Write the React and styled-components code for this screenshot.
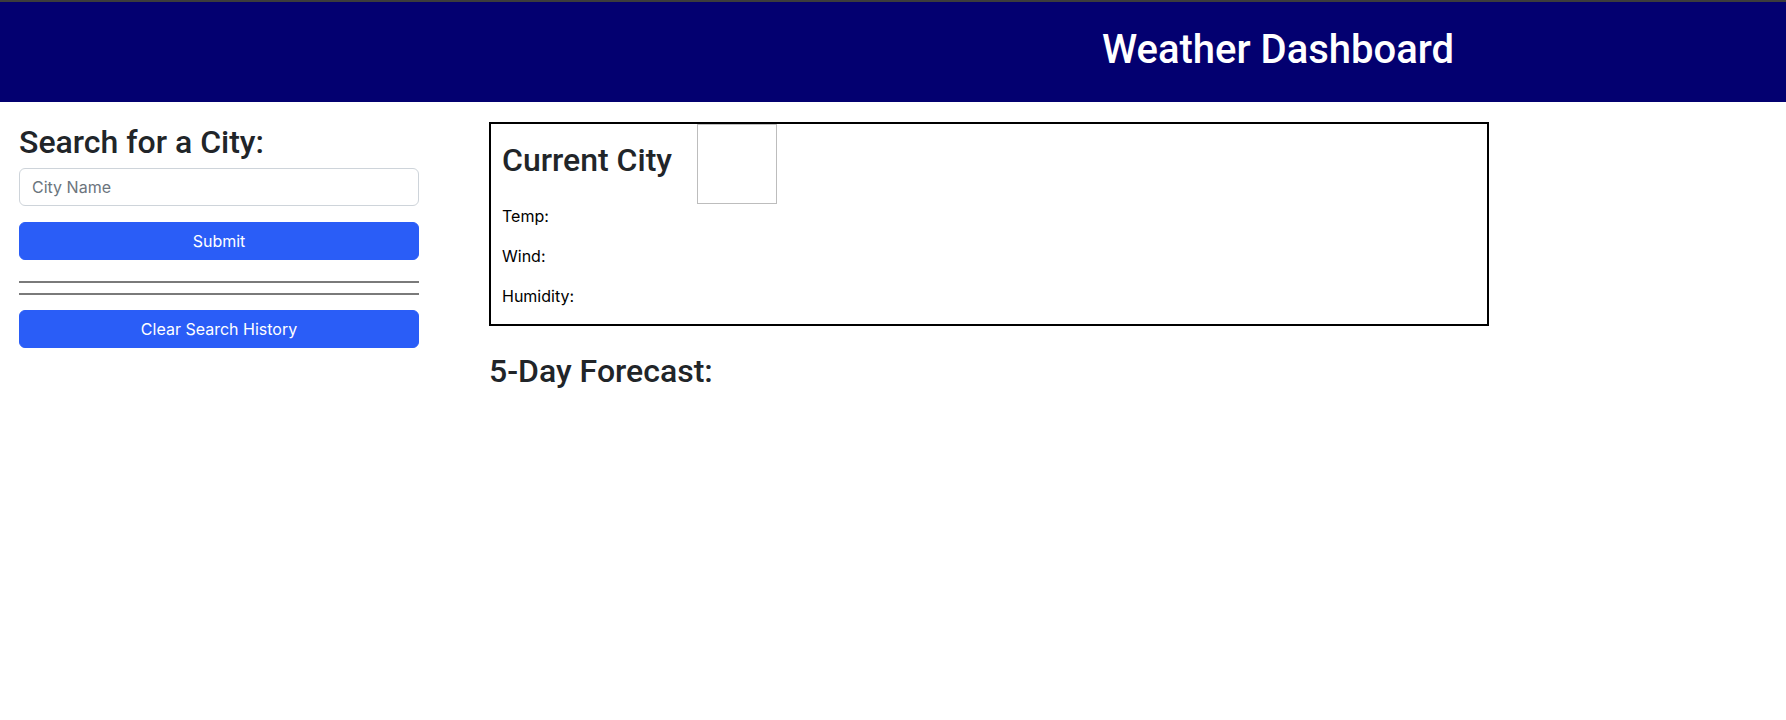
import React from "react";
import styled, { createGlobalStyle } from "styled-components";

const GlobalStyle = createGlobalStyle`
  html, body { margin: 0; padding: 0; background: #ffffff; }
  body {
    font-family: Inter, "Liberation Sans", Arial, sans-serif;
    font-size: 16px;
    line-height: 1.5;
    color: #212529;
  }
  * { box-sizing: border-box; }
`;

const Header = styled.header`
  height: 102px;
  border-top: 2px solid #3c3c3c;
  background: #030070;
  display: flex;
  align-items: center;
  justify-content: center;
  padding: 0 0 4px 770px;
`;

const Title = styled.h1`
  margin: 0;
  color: #ffffff;
  font-family: Roboto, Inter, "Liberation Sans", sans-serif;
  font-size: 40px;
  font-weight: 500;
  line-height: 1.2;
  letter-spacing: 0;
`;

const Main = styled.main`
  display: flex;
  align-items: flex-start;
  gap: 70px;
  padding: 0 0 0 19px;
`;

const Sidebar = styled.aside`
  width: 400px;
  display: flex;
  flex-direction: column;
  padding-top: 21px;
`;

const Heading = styled.h2`
  margin: ${(p) => p.$margin || "0"};
  font-family: Roboto, Inter, "Liberation Sans", sans-serif;
  font-size: 32px;
  font-weight: 500;
  line-height: 1.2;
  letter-spacing: 0;
  color: #212529;
`;

const Input = styled.input`
  display: block;
  width: 100%;
  height: 38px;
  padding: 6px 12px;
  font: inherit;
  font-size: 16px;
  color: #212529;
  border: 1px solid #ced4da;
  border-radius: 6px;
  background: #fff;
  &::placeholder { color: #6c757d; }
`;

const Button = styled.button`
  display: block;
  width: 100%;
  height: 38px;
  margin-top: ${(p) => p.$top || 0}px;
  border: 1px solid #2a5df7;
  border-radius: 6px;
  background: #2a5df7;
  color: #ffffff;
  font: inherit;
  font-size: 16px;
  cursor: pointer;
`;

const Rule = styled.hr`
  width: 100%;
  height: 0;
  margin: ${(p) => p.$top}px 0 0 0;
  border: 0;
  border-top: 2px solid #7a7a7a;
`;

const Content = styled.section`
  width: 1000px;
  padding-top: 20px;
`;

const Card = styled.div`
  border: 2px solid #000000;
  padding: 0 11px;
`;

const CardHead = styled.div`
  display: flex;
  align-items: center;
`;

const IconBox = styled.div`
  width: 80px;
  height: 80px;
  margin-left: 25px;
  border: 1px solid #bdbdbd;
`;

const Stat = styled.p`
  margin: 0 0 16px 0;
  font-size: 16px;
  line-height: 24px;
  color: #000;
`;

export default function App() {
  return (
    <>
      <GlobalStyle />
      <Header>
        <Title>Weather Dashboard</Title>
      </Header>
      <Main>
        <Sidebar>
          <Heading $margin="0 0 7px 0">Search for a City:</Heading>
          <Input type="text" placeholder="City Name" />
          <Button $top={16}>Submit</Button>
          <Rule $top={21} />
          <Rule $top={10} />
          <Button $top={15}>Clear Search History</Button>
        </Sidebar>
        <Content>
          <Card>
            <CardHead>
              <Heading $margin="0 0 8px 0">Current City</Heading>
              <IconBox />
            </CardHead>
            <Stat>Temp:</Stat>
            <Stat>Wind:</Stat>
            <Stat>Humidity:</Stat>
          </Card>
          <Heading $margin="26px 0 0 0">5-Day Forecast:</Heading>
        </Content>
      </Main>
    </>
  );
}
